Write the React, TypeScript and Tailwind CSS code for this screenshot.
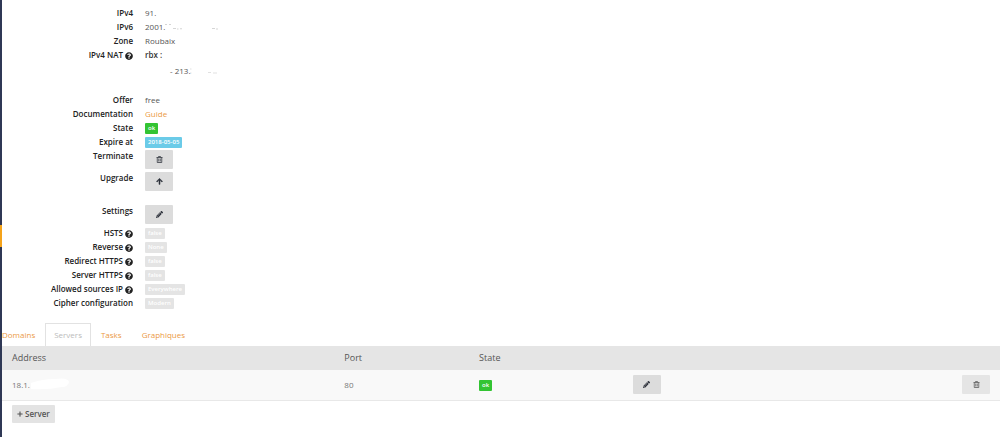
import React from 'react';
import { FaArrowUp, FaPencilAlt, FaPlus, FaQuestionCircle } from 'react-icons/fa';

interface RowProps {
  label: string;
  help?: boolean;
  className?: string;
  children: React.ReactNode;
}

const Row: React.FC<RowProps> = ({ label, help, className = 'h-[14px]', children }) => (
  <div className={`grid grid-cols-[131px_1fr] gap-x-3 ${className}`}>
    <dt className="flex h-[14px] items-center justify-end gap-[2px] whitespace-nowrap font-semibold text-[#222]">
      {label}
      {help && <FaQuestionCircle size={8} className="mt-px" />}
    </dt>
    <dd className="text-[#555]">{children}</dd>
  </div>
);

interface BadgeProps {
  tone?: 'ok' | 'info' | 'muted';
  children: React.ReactNode;
}

const tones = {
  ok: 'bg-[#33c433] text-white',
  info: 'bg-[#6bcbe8] text-white',
  muted: 'bg-[#e4e4e4] text-white',
};

const Badge: React.FC<BadgeProps> = ({ tone = 'muted', children }) => (
  <span
    className={`inline-block h-[11px] rounded-[1px] px-[3px] align-middle text-[6px] leading-[11px] font-semibold ${tones[tone]}`}
  >
    {children}
  </span>
);

interface IconButtonProps {
  label: string;
  className?: string;
  children: React.ReactNode;
}

const IconButton: React.FC<IconButtonProps> = ({ label, className = 'bg-[#dcdcdc] text-[#2c303a]', children }) => (
  <button
    type="button"
    aria-label={label}
    className={`flex h-[19px] w-7 items-center justify-center rounded-[1px] ${className}`}
  >
    {children}
  </button>
);

const TrashIcon: React.FC = () => (
  <svg width="7" height="7" viewBox="0 0 14 14" fill="none" stroke="currentColor" strokeWidth="1.5" aria-hidden="true">
    <path d="M1 3h12M5 2.500V1h4v1.500M2.500 3v10h9V3M5.500 5v6M8.500 5v6" />
  </svg>
);

const tabs = ['Domains', 'Servers', 'Tasks', 'Graphiques'];

const options = [
  { label: 'HSTS', value: 'false', help: true },
  { label: 'Reverse', value: 'None', help: true },
  { label: 'Redirect HTTPS', value: 'false', help: true },
  { label: 'Server HTTPS', value: 'false', help: true },
  { label: 'Allowed sources IP', value: 'Everywhere', help: true },
  { label: 'Cipher configuration', value: 'Modern', help: false },
];

const App: React.FC = () => {
  return (
    <div className="flex min-h-screen bg-white font-['Open_Sans',sans-serif] text-[8px] leading-[14px]">
      {/* Edge of the sidebar with the active entry */}
      <aside className="w-[2px] shrink-0 bg-[#2f3855] pt-[225px]">
        <div className="h-[22px] bg-[#f5a31a]" />
      </aside>

      <main className="min-w-0 flex-1">
        {/* Service details */}
        <dl className="pt-[6px]">
          <Row label="IPv4">91.</Row>
          <Row label="IPv6">
            <span className="flex">
              2001.
              <svg width="56" height="14" viewBox="0 0 56 14" fill="none" stroke="#999" strokeWidth="0.6" aria-hidden="true">
                <path d="M0 4.500h2M4 4.500h2M8 8.500h3M12 9h1.500M15 9q1-1 2 0M47 8.500h3M51 9h2" strokeOpacity="0.7" />
              </svg>
            </span>
          </Row>
          <Row label="Zone">Roubaix</Row>
          <Row label="IPv4 NAT" help className="h-[45px]">
            <p className="font-semibold text-[#333]">rbx :</p>
            <p className="flex pt-[2px] pl-[25px]">
              - 213.
              <svg width="30" height="14" viewBox="0 0 30 14" fill="none" stroke="#aaa" strokeWidth="0.6" aria-hidden="true">
                <path d="M0 5h1.500M0 9h1.500M18 8.500h3M23 9h4" strokeOpacity="0.6" />
              </svg>
            </p>
          </Row>
          <Row label="Offer">free</Row>
          <Row label="Documentation">
            <a href="#guide" className="text-[#eb9a45]">Guide</a>
          </Row>
          <Row label="State">
            <Badge tone="ok">ok</Badge>
          </Row>
          <Row label="Expire at">
            <Badge tone="info">2018-05-05</Badge>
          </Row>
          <Row label="Terminate" className="h-[22px]">
            <div className="pt-px">
              <IconButton label="Terminate">
                <TrashIcon />
              </IconButton>
            </div>
          </Row>
          <Row label="Upgrade" className="h-[33px]">
            <div className="pt-px">
              <IconButton label="Upgrade">
                <FaArrowUp size={7} stroke="currentColor" strokeWidth={30} />
              </IconButton>
            </div>
          </Row>
          <Row label="Settings" className="h-[22px]">
            <div className="pt-px">
              <IconButton label="Edit settings">
                <FaPencilAlt size={7} />
              </IconButton>
            </div>
          </Row>
          {options.map((option) => (
            <Row key={option.label} label={option.label} help={option.help}>
              <Badge>{option.value}</Badge>
            </Row>
          ))}
        </dl>

        {/* Tabs */}
        <nav className="mt-[13px] flex h-[23px]">
          {tabs.map((tab) =>
            tab === 'Servers' ? (
              <a
                key={tab}
                href="#servers"
                aria-current="page"
                className="border border-b-0 border-[#e2e2e2] px-2 pt-1 text-[#bbb]"
              >
                {tab}
              </a>
            ) : (
              <a
                key={tab}
                href={`#${tab.toLowerCase()}`}
                className="px-[10px] pt-[5px] text-[#eb9a45] first:pl-0"
              >
                {tab}
              </a>
            ),
          )}
        </nav>

        {/* Servers */}
        <table className="w-full table-fixed text-left">
          <colgroup>
            <col className="w-[33.3%]" />
            <col className="w-[13.5%]" />
            <col className="w-[15.4%]" />
            <col />
            <col />
          </colgroup>
          <thead className="bg-[#e5e5e5] text-[9px] text-[#555]">
            <tr className="h-6">
              <th className="px-[10px] font-normal">Address</th>
              <th className="px-[10px] font-normal">Port</th>
              <th className="px-[10px] font-normal">State</th>
              <td />
              <td />
            </tr>
          </thead>
          <tbody>
            <tr className="h-[30px] border-b border-[#e8e8e8] bg-[#f9f9f9] text-[#777]">
              <td className="px-[10px]">
                <span className="flex items-center">
                  18.1.
                  <svg width="40" height="13" viewBox="0 0 40 13" fill="#fff" aria-hidden="true">
                    <path d="M1 5Q12 1 25 1Q38-1 39 4Q38 9 32 9Q17 12 1 11Z" />
                  </svg>
                </span>
              </td>
              <td className="px-[10px]">80</td>
              <td className="px-[10px]">
                <Badge tone="ok">ok</Badge>
              </td>
              <td className="px-[10px]">
                <IconButton label="Edit server">
                  <FaPencilAlt size={7} />
                </IconButton>
              </td>
              <td className="px-[10px]">
                <IconButton label="Delete server" className="ml-auto bg-[#e5e5e5] text-[#555]">
                  <TrashIcon />
                </IconButton>
              </td>
            </tr>
          </tbody>
        </table>

        <div className="px-[10px] py-1">
          <button
            type="button"
            className="flex h-[18px] items-center gap-[2px] rounded-[1px] bg-[#e3e3e3] px-[5px] font-semibold text-[#555]"
          >
            <FaPlus size={6} />
            Server
          </button>
        </div>
      </main>
    </div>
  );
};

export default App;
